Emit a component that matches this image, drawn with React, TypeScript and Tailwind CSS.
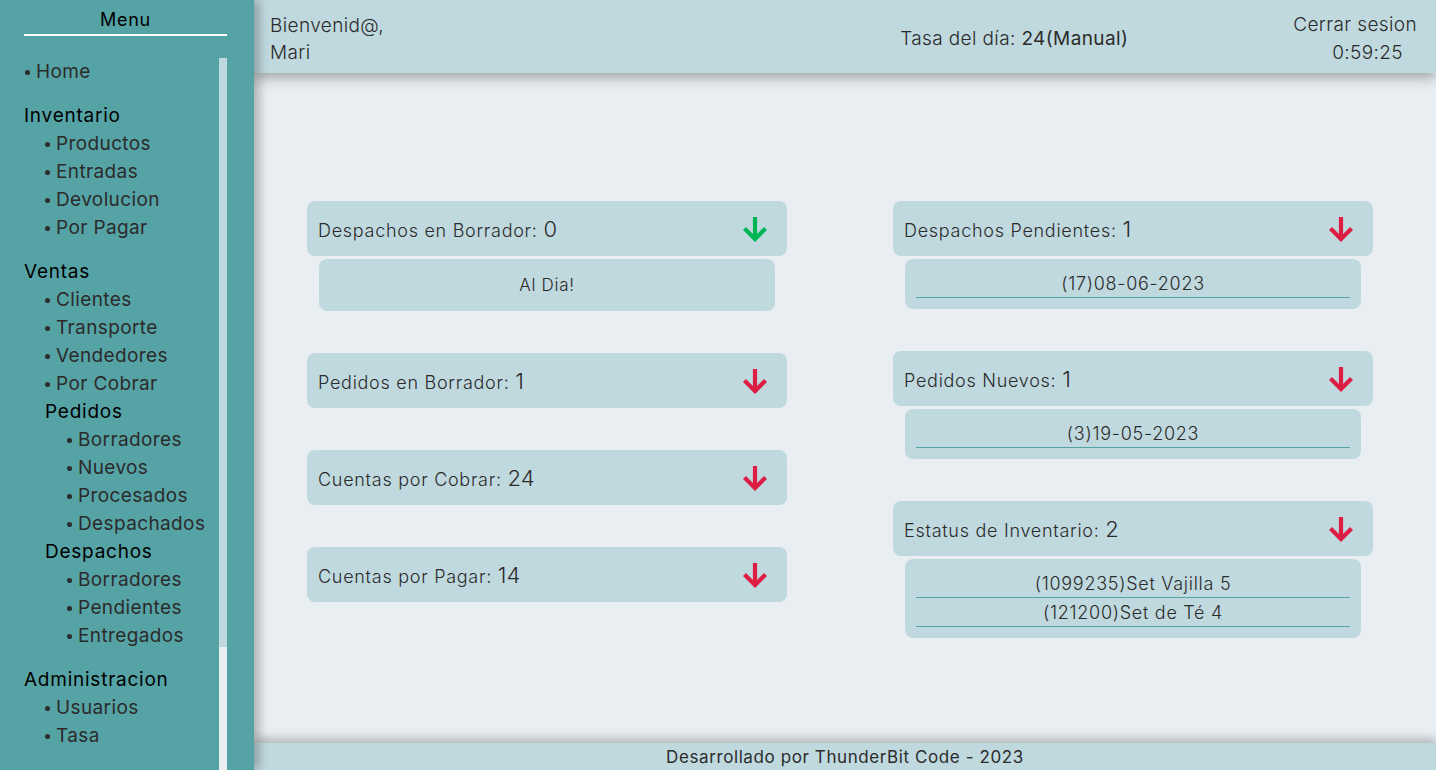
import { ReactNode } from 'react';

const FONT = "font-['Inter','Noto_Sans',sans-serif]";

type MenuNode = { label: string; kind: 'item' | 'group'; children?: MenuNode[] };

const menu: { title?: string; items: MenuNode[] }[] = [
    { items: [{ label: 'Home', kind: 'item' }] },
    {
        title: 'Inventario',
        items: ['Productos', 'Entradas', 'Devolucion', 'Por Pagar'].map((label) => ({ label, kind: 'item' as const })),
    },
    {
        title: 'Ventas',
        items: [
            ...['Clientes', 'Transporte', 'Vendedores', 'Por Cobrar'].map((label) => ({ label, kind: 'item' as const })),
            {
                label: 'Pedidos',
                kind: 'group',
                children: ['Borradores', 'Nuevos', 'Procesados', 'Despachados'].map((label) => ({ label, kind: 'item' as const })),
            },
            {
                label: 'Despachos',
                kind: 'group',
                children: ['Borradores', 'Pendientes', 'Entregados'].map((label) => ({ label, kind: 'item' as const })),
            },
        ],
    },
    {
        title: 'Administracion',
        items: ['Usuarios', 'Tasa'].map((label) => ({ label, kind: 'item' as const })),
    },
];

const Bullet = ({ children }: { children: ReactNode }) => (
    <li className="flex items-center h-[28px] text-[19px] text-[#2b2b2b] tracking-[0.02em] whitespace-nowrap">
        <span className="w-[5px] h-[5px] rounded-full bg-[#2b2b2b] mr-[6px] shrink-0" />
        {children}
    </li>
);

const ArrowDown = ({ color }: { color: string }) => (
    <svg width="28" height="28" viewBox="0 0 28 28" fill="none" className={color}>
        <path d="M14 2v22" stroke="currentColor" strokeWidth="4.2" />
        <path d="M3.5 13.5 14 24 24.5 13.5" stroke="currentColor" strokeWidth="4.2" strokeLinejoin="miter" />
    </svg>
);

const Sidebar = () => (
    <aside className="relative z-20 w-[254px] shrink-0 h-full bg-[#56a3a6] pl-[24px] pr-[27px] shadow-[5px_0_10px_rgba(0,0,0,0.28)] flex flex-col">
        <div className="h-[36px] border-b-2 border-white flex items-center justify-center text-[18px] tracking-[0.04em] text-black pt-[5px]">Menu</div>
        <div className="mt-[22px] flex flex-1 min-h-0">
            <nav className="flex-1 overflow-hidden">
                {menu.map((section, i) => (
                    <div key={i} className="mb-[16px]">
                        {section.title && (
                            <div className="h-[28px] flex items-center text-[19px] tracking-[0.04em] text-black">{section.title}</div>
                        )}
                        <ul className={section.title ? 'pl-[21px]' : 'pl-[1px]'}>
                            {section.items.map((item) =>
                                item.kind === 'group' ? (
                                    <li key={item.label}>
                                        <div className="h-[28px] flex items-center text-[19px] tracking-[0.04em] text-black">{item.label}</div>
                                        <ul className="pl-[22px]">
                                            {item.children?.map((c) => (
                                                <Bullet key={c.label}>{c.label}</Bullet>
                                            ))}
                                        </ul>
                                    </li>
                                ) : (
                                    <Bullet key={item.label}>{item.label}</Bullet>
                                )
                            )}
                        </ul>
                    </div>
                ))}
            </nav>
            <div className="w-[8px] flex flex-col bg-[#e8eef2]">
                <div className="h-[589px] bg-[#c0d9df]" />
            </div>
        </div>
    </aside>
);

type CardProps = { label: string; value: string; ok?: boolean; details?: string[]; empty?: string };

const StatusCard = ({ label, value, ok, details, empty }: CardProps) => (
    <div className="w-[480px] mx-auto">
        <div className="h-[55px] rounded-[8px] bg-[#c0d9df] flex items-center justify-between pl-[11px] pr-[18px]">
            <p className="text-[18px] font-light tracking-[0.04em] text-[#2b2b2b] pt-[1px]">
                {label}: <span className="text-[22px] tracking-normal">{value}</span>
            </p>
            <ArrowDown color={ok ? 'text-[#00b553]' : 'text-[#dd1d43]'} />
        </div>
        {empty && (
            <div className="mt-[3px] mx-[12px] h-[52px] rounded-[8px] bg-[#c0d9df] flex items-center justify-center text-[17px] font-light tracking-[0.04em] text-[#2b2b2b] pt-[2px]">
                {empty}
            </div>
        )}
        {details && (
            <div className="mt-[3px] mx-[12px] rounded-[8px] bg-[#c0d9df] px-[11px] pt-[10px] pb-[11px]">
                {details.map((d) => (
                    <div key={d} className="h-[29px] border-b border-[#56a3a6] flex items-center justify-center text-[18px] font-light tracking-[0.04em] text-[#2b2b2b]">
                        {d}
                    </div>
                ))}
            </div>
        )}
    </div>
);

export default function App() {
    return (
        <div className={`h-[770px] w-full flex overflow-hidden bg-[#e8eef2] ${FONT}`}>
            <Sidebar />
            <div className="flex-1 min-w-0 flex flex-col">
                <header className="relative z-10 h-[73px] shrink-0 bg-[#c0d9df] shadow-[0_5px_12px_rgba(0,0,0,0.3)] flex items-center pl-[16px] pr-[19px] text-[19px] tracking-[0.02em] text-[#2b2b2b]">
                    <div className="leading-[27px] font-light pt-[4px]">
                        <div>Bienvenid@,</div>
                        <div>Mari</div>
                    </div>
                    <div className="ml-auto font-light pt-[6px]">
                        Tasa del día: <span className="font-normal">24(Manual)</span>
                    </div>
                    <div className="ml-[165px] text-right leading-[28px] font-light pt-[4px]">
                        <div>Cerrar sesion</div>
                        <div className="pr-[14px]">0:59:25</div>
                    </div>
                </header>
                <main className="flex-1 min-h-0 grid grid-cols-2 pr-[10px] pt-[128px]">
                    <div className="flex flex-col gap-[42px]">
                        <StatusCard label="Despachos en Borrador" value="0" ok empty="Al Dia!" />
                        <StatusCard label="Pedidos en Borrador" value="1" />
                        <StatusCard label="Cuentas por Cobrar" value="24" />
                        <StatusCard label="Cuentas por Pagar" value="14" />
                    </div>
                    <div className="flex flex-col gap-[42px]">
                        <StatusCard label="Despachos Pendientes" value="1" details={['(17)08-06-2023']} />
                        <StatusCard label="Pedidos Nuevos" value="1" details={['(3)19-05-2023']} />
                        <StatusCard label="Estatus de Inventario" value="2" details={['(1099235)Set Vajilla 5', '(121200)Set de Té 4']} />
                    </div>
                </main>
                <footer className="relative z-10 h-[27px] shrink-0 bg-[#c0d9df] shadow-[0_-5px_10px_rgba(0,0,0,0.22)] flex items-center justify-center text-[17px] tracking-[0.035em] text-[#2b2b2b] pt-[2px]">
                    Desarrollado por ThunderBit Code - 2023
                </footer>
            </div>
        </div>
    );
}
